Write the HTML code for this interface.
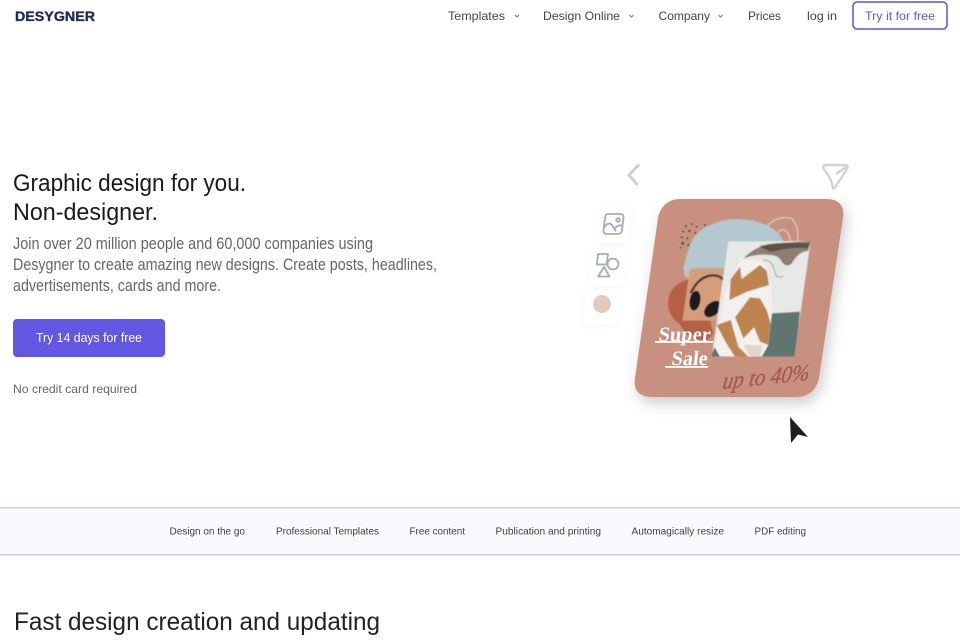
<!DOCTYPE html>
<html lang="en"><head><meta charset="utf-8"><title>Desygner</title>
<style>
html,body{margin:0;padding:0;background:#fff;width:960px;height:640px;overflow:hidden}
svg{display:block}
text{font-family:"Liberation Sans",sans-serif}
.nav{font-size:12px;fill:#444}
.st{font-size:10.5px;fill:#3c3f4a}
.p{font-size:16.5px;fill:#666}
</style></head><body>
<svg width="960" height="640" viewBox="0 0 960 640" xmlns="http://www.w3.org/2000/svg">
<defs>
<filter id="sh" x="-20%" y="-20%" width="140%" height="140%"><feDropShadow dx="3" dy="6" stdDeviation="7" flood-color="#000" flood-opacity=".2"/></filter>
<filter id="ts" x="-30%" y="-30%" width="160%" height="160%"><feDropShadow dx="0" dy="1" stdDeviation="2" flood-color="#8a93a8" flood-opacity=".1"/></filter>
<filter id="b"><feGaussianBlur stdDeviation=".45"/></filter>
<filter id="b2"><feGaussianBlur stdDeviation="2"/></filter>
<clipPath id="ph"><path d="M205 95L452 93L403 440H155Z"/></clipPath>
</defs>
<rect width="960" height="640" fill="#fff"/>

<text x="15" y="21" font-size="14" font-weight="700" fill="#1d2d55" stroke="#1d2d55" stroke-width=".35" textLength="80" lengthAdjust="spacingAndGlyphs">DESYGNER</text>
<text class="nav" x="448" y="20" textLength="57" lengthAdjust="spacingAndGlyphs">Templates</text>
<path d="M515 15l2 2 2-2" fill="none" stroke="#777" stroke-width="1"/>
<text class="nav" x="543" y="20" textLength="77" lengthAdjust="spacingAndGlyphs">Design Online</text>
<path d="M629.500 15l2 2 2-2" fill="none" stroke="#777" stroke-width="1"/>
<text class="nav" x="658.500" y="20" textLength="51.500" lengthAdjust="spacingAndGlyphs">Company</text>
<path d="M718.500 15l2 2 2-2" fill="none" stroke="#777" stroke-width="1"/>
<text class="nav" x="748" y="20" textLength="33" lengthAdjust="spacingAndGlyphs">Prices</text>
<text class="nav" x="807" y="20" textLength="30" lengthAdjust="spacingAndGlyphs">log in</text>
<rect x="853" y="2" width="94" height="27" rx="4" fill="#fff" stroke="#5b52e0" stroke-width="1.500"/>
<text class="nav" x="865" y="20" textLength="70" lengthAdjust="spacingAndGlyphs" style="fill:#5f55e0">Try it for free</text>

<text x="13" y="191" font-size="24" fill="#1a1a1a" textLength="233" lengthAdjust="spacingAndGlyphs">Graphic design for you.</text>
<text x="13" y="220" font-size="24" fill="#1a1a1a" textLength="145" lengthAdjust="spacingAndGlyphs">Non-designer.</text>
<text class="p" x="13" y="249" textLength="360" lengthAdjust="spacingAndGlyphs">Join over 20 million people and 60,000 companies using</text>
<text class="p" x="13" y="270" textLength="424" lengthAdjust="spacingAndGlyphs">Desygner to create amazing new designs. Create posts, headlines,</text>
<text class="p" x="13" y="291" textLength="208" lengthAdjust="spacingAndGlyphs">advertisements, cards and more.</text>
<rect x="13" y="319" width="152" height="38" rx="4" fill="#6257e3"/>
<text x="36" y="342" font-size="12.500" fill="#fff" textLength="106" lengthAdjust="spacingAndGlyphs">Try 14 days for free</text>
<text x="13" y="393" font-size="12" fill="#666" textLength="124" lengthAdjust="spacingAndGlyphs">No credit card required</text>

<!-- decorations -->
<path d="M639 164.500L629 175L637.500 185" fill="none" stroke="#cfcfcf" stroke-width="3"/>
<path d="M826 165H845Q849 165 847 169L836 186Q833 191 832.500 186Q831 178 825 171Q821 165 826 165ZM836 174L846 167" fill="none" stroke="#d2d2d2" stroke-width="2.400" stroke-linejoin="round"/>

<path d="M603 206H628Q633 206 632 211L629 238Q628 243 623 243H601Q596 243 596 238L598 211Q599 206 603 206Z" fill="#fff" filter="url(#ts)"/>
<path d="M596 248H622Q627 248 626 253L623 281Q622 286 617 286H594Q589 286 589 281L591 253Q592 248 596 248Z" fill="#fff" filter="url(#ts)"/>
<path d="M589 289H616Q621 289 620 294L617 320Q616 325 611 325H588Q583 325 584 320L585 294Q586 289 589 289Z" fill="#fff" filter="url(#ts)"/>
<g fill="none" stroke="#a4adba" stroke-width="1.800" stroke-linejoin="round">
<path d="M608 214H620Q624 214 623.500 218L622 230Q621.500 234 617 234H607Q603 234 603.500 230L605 218Q605.500 214 608 214Z"/>
<path d="M604 228Q608 221 612 225L616 231.500M615 228Q619 224 623 226"/>
<circle cx="618" cy="220" r="1.800"/>
<path d="M598 254H608L606.500 264.500H597Z"/>
<circle cx="613" cy="264" r="5.500"/>
<path d="M604 267L609.500 276.500H598Z"/>
</g>
<circle cx="602" cy="304" r="9" fill="#e4cbc0"/>

<!-- card -->
<path d="M680 199H826C840 199 845 207 843 218L819 378C816 391 808 397 796 397H652C639 397 633 390 635 378L658 218C660 207 668 199 680 199Z" fill="#c8917f" filter="url(#sh)"/>
<g filter="url(#b)">
<g transform="translate(660 210) scale(.33333)">
<path d="M320 50Q350 15 395 25Q420 55 412 95M345 78Q365 45 385 70L392 95" fill="none" stroke="#ecd6c4" stroke-width="3"/>
<path d="M70 175Q78 140 85 120Q100 70 140 50Q170 35 195 30Q240 22 290 35Q330 45 355 70Q375 95 370 100H205L195 190L120 210L75 200Z" fill="#b4c8cf"/>
<circle cx="95" cy="280" r="71" fill="#b65f47"/>
<path d="M60 345Q115 430 160 370L150 330H60Z" fill="#b65f47"/>
<g fill="#3b2a25"><circle cx="78" cy="48" r="2.500"/><circle cx="95" cy="42" r="2.500"/><circle cx="110" cy="50" r="2.500"/><circle cx="135" cy="45" r="2.500"/><circle cx="70" cy="65" r="2.500"/><circle cx="88" cy="63" r="3"/><circle cx="105" cy="68" r="2.500"/><circle cx="65" cy="82" r="2.500"/><circle cx="82" cy="85" r="2.500"/><circle cx="68" cy="100" r="3.500"/><circle cx="85" cy="105" r="2.500"/><circle cx="62" cy="113" r="2"/></g>
<path d="M90 175H200L180 332H67Z" fill="#d69d7a"/>
<path d="M92 250Q120 190 170 197Q200 205 200 245" fill="none" stroke="#3d3a38" stroke-width="7"/>
<ellipse cx="105" cy="272" rx="16" ry="30" transform="rotate(10 105 272)" fill="#1d1c1d"/>
<ellipse cx="158" cy="297" rx="19" ry="30" transform="rotate(48 158 297)" fill="#1d1c1d"/>
<g clip-path="url(#ph)">
<rect x="150" y="90" width="310" height="355" fill="#e7e9e7"/>
<path d="M335 310L420 305L405 445H300Z" fill="#5f7570"/>
<path d="M190 345L150 445H215Z" fill="#5f7570"/>
<path d="M245 140L280 130L320 170L332 230L337 300L325 405L305 440H180L160 405L185 310L195 250L225 185Z" fill="#f2f1ee"/>
<path d="M212 208L240 170L245 207L300 165L320 182L327 225L262 245L208 270Z" fill="#bd8450"/>
<path d="M225 322L270 262L300 265L320 300L332 340L325 405L300 395L282 352L250 385L236 348Z" fill="#bd8450"/>
<path d="M170 345L212 330L235 410L265 440H225L200 402Z" fill="#bd8450"/>
<path d="M250 405L306 405L300 440H272L262 425Z" fill="#e0d6cc"/>
<path d="M245 150L285 115L300 100L452 93L442 125L420 130L400 165L375 182L350 205L338 170L320 150Z" fill="#e4e6e4"/>
<path d="M250 145Q290 105 340 100L452 93L445 122Q415 125 395 160Q380 175 365 155Q355 135 330 135Q290 130 250 145Z" fill="#8e7f72"/>
<path d="M300 108Q370 95 450 100L442 115Q390 110 340 125Q320 125 300 108Z" fill="#5f5147"/>
<path d="M310 150Q340 150 345 190Q350 205 370 200" fill="none" stroke="#a9a29a" stroke-width="3"/>
</g>
</g>
</g>
<text transform="translate(658 341) skewX(-7)" font-size="20.500" font-weight="700" fill="#fff" style="font-family:'Liberation Serif',serif" textLength="52" lengthAdjust="spacingAndGlyphs">Super</text>
<rect x="655" y="341" width="58" height="1.800" fill="#fff"/>
<text transform="translate(671 365) skewX(-7)" font-size="20.500" font-weight="700" fill="#fff" style="font-family:'Liberation Serif',serif" textLength="36" lengthAdjust="spacingAndGlyphs">Sale</text>
<rect x="665" y="366" width="43" height="1.800" fill="#fff"/>
<text transform="translate(722 389) rotate(-6) skewX(-14)" font-size="23" font-style="italic" fill="#a65a50" stroke="#a65a50" stroke-width=".4" style="font-family:'Liberation Serif',serif" textLength="87" lengthAdjust="spacingAndGlyphs">up to 40%</text>

<path d="M790 417L808 437L798 434.500L791 443Z" fill="#1c1f22"/>

<!-- strip -->
<rect x="0" y="507" width="960" height="49" fill="#f9fafe"/>
<rect x="0" y="507" width="960" height="1.500" fill="#ccd0dc"/>
<rect x="0" y="554" width="960" height="1.500" fill="#ccd0dc"/>
<text class="st" x="169.500" y="534.500" textLength="75.500" lengthAdjust="spacingAndGlyphs">Design on the go</text>
<text class="st" x="276" y="534.500" textLength="103" lengthAdjust="spacingAndGlyphs">Professional Templates</text>
<text class="st" x="409.500" y="534.500" textLength="55.500" lengthAdjust="spacingAndGlyphs">Free content</text>
<text class="st" x="495.500" y="534.500" textLength="105.500" lengthAdjust="spacingAndGlyphs">Publication and printing</text>
<text class="st" x="631.500" y="534.500" textLength="92.500" lengthAdjust="spacingAndGlyphs">Automagically resize</text>
<text class="st" x="754.500" y="534.500" textLength="51.500" lengthAdjust="spacingAndGlyphs">PDF editing</text>

<text x="14" y="630" font-size="25" fill="#222" textLength="366" lengthAdjust="spacingAndGlyphs">Fast design creation and updating</text>
</svg>
</body></html>
